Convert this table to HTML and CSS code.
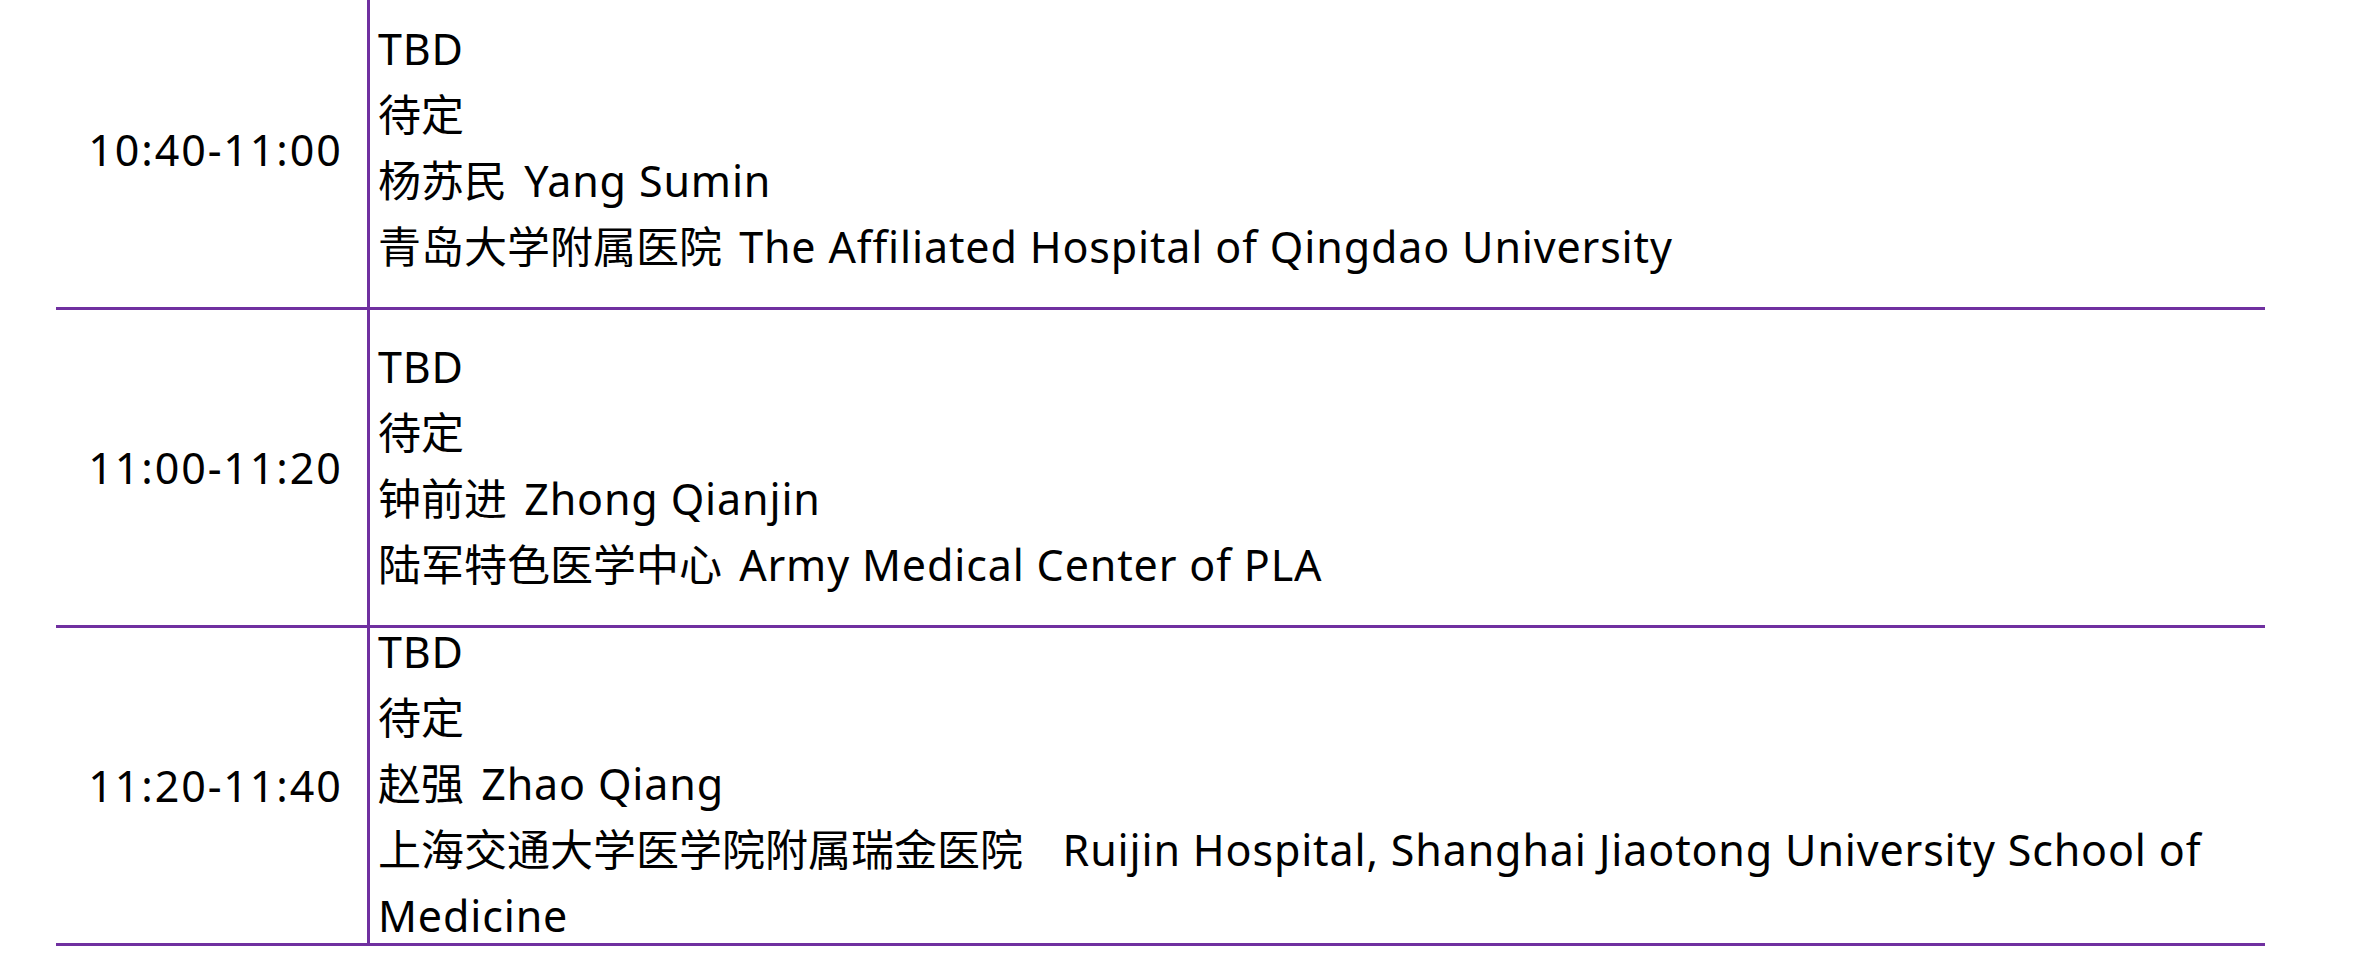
FILE: index.html
```html
<!DOCTYPE html>
<html lang="zh-CN">
<head>
    <meta charset="UTF-8">
    <meta name="viewport" content="width=device-width, initial-scale=1.0">
    <title>Schedule</title>
    <link rel="stylesheet" href="styles.css">
</head>
<body>
    <div class="schedule">
        <div class="row">
            <div class="time">10:40-11:00</div>
            <div class="talk">
                <div class="line"><span class="en">TBD</span></div>
                <div class="line">待定</div>
                <div class="line">杨苏民 <span class="en tail">Yang Sumin</span></div>
                <div class="line">青岛大学附属医院 <span class="en tail">The Affiliated Hospital of Qingdao University</span></div>
            </div>
        </div>

        <div class="row">
            <div class="time">11:00-11:20</div>
            <div class="talk">
                <div class="line"><span class="en">TBD</span></div>
                <div class="line">待定</div>
                <div class="line">钟前进 <span class="en tail">Zhong Qianjin</span></div>
                <div class="line">陆军特色医学中心 <span class="en tail">Army Medical Center of PLA</span></div>
            </div>
        </div>

        <div class="row">
            <div class="time">11:20-11:40</div>
            <div class="talk">
                <div class="line"><span class="en">TBD</span></div>
                <div class="line">待定</div>
                <div class="line">赵强 <span class="en tail">Zhao Qiang</span></div>
                <div class="line">上海交通大学医学院附属瑞金医院&nbsp;&nbsp; <span class="en tail">Ruijin Hospital, Shanghai Jiaotong University School of</span></div>
                <div class="line"><span class="en">Medicine</span></div>
            </div>
        </div>
    </div>
</body>
</html>
```

FILE: styles.css
```css
body {
    margin: 0;
    background: #fff;
    color: #000;
    font-family: "Noto Sans", "Noto Sans CJK SC", sans-serif;
    font-size: 43px;
    overflow: hidden;
}

.schedule {
    margin: -8px 0 0 56px;
    width: 2209px;
}

.row {
    display: grid;
    grid-template-columns: 314px 1fr;
    height: 318px;
    border-bottom: 3px solid #7030a0;
    box-sizing: border-box;
}

.time {
    display: flex;
    align-items: center;
    justify-content: center;
    padding-left: 8px;
    border-right: 3px solid #7030a0;
    line-height: 66px;
    letter-spacing: 1.9px;
}

.talk {
    display: flex;
    flex-direction: column;
    justify-content: center;
    padding: 0 0 3px 8px;
    min-height: 0;
}

.line {
    height: 66px;
    line-height: 66px;
    white-space: nowrap;
    flex-shrink: 0;
}

.en {
    letter-spacing: 0.85px;
}

.tail {
    margin-left: 6px;
}
```
